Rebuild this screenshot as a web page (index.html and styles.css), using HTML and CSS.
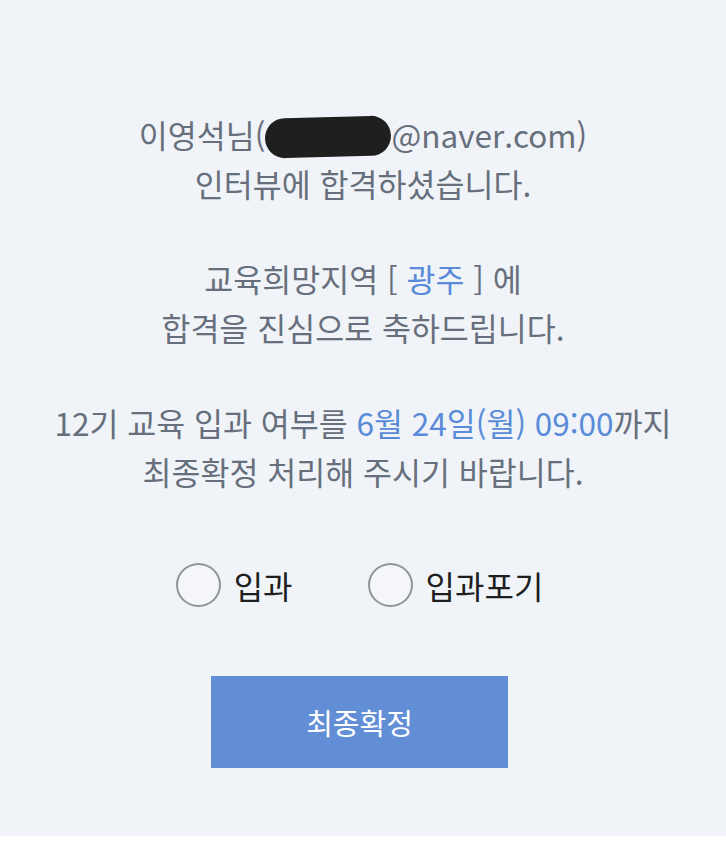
FILE: index.html
```html
<!DOCTYPE html>
<html lang="ko">
<head>
    <meta charset="UTF-8">
    <meta name="viewport" content="width=device-width, initial-scale=1.0">
    <title>면접 결과 안내</title>
    <link rel="stylesheet" href="styles.css">
</head>
<body>
    <div class="result">
        <p class="msg">이영석님(<span class="masked"></span>@naver.com)<br>인터뷰에 합격하셨습니다.</p>
        <p class="msg">교육희망지역 [ <span class="point">광주</span> ] 에<br>합격을 진심으로 축하드립니다.</p>
        <p class="msg">12기 교육 입과 여부를 <span class="point">6월 24일(월) 09:00</span>까지<br>최종확정 처리해 주시기 바랍니다.</p>

        <div class="choice">
            <label class="radio"><input type="radio" name="join" value="Y"><span class="mark"></span>입과</label>
            <label class="radio"><input type="radio" name="join" value="N"><span class="mark"></span>입과포기</label>
        </div>

        <button class="confirm-btn" type="button">최종확정</button>
    </div>
</body>
</html>
```

FILE: styles.css
```css
* {
    box-sizing: border-box;
    margin: 0;
    padding: 0;
    font-family: "Noto Sans CJK KR", "Noto Sans", sans-serif;
}

body {
    background: #fff;
}

.result {
    height: 836px;
    background-color: #f0f4f8;
    padding-top: 110px;
    display: flex;
    flex-direction: column;
    align-items: center;
}

.msg {
    text-align: center;
    font-size: 31.5px;
    line-height: 49px;
    color: #676f7c;
    margin-bottom: 46px;
}

.msg:last-of-type {
    margin-bottom: 0;
}

.point {
    color: #5a8bd8;
}

.masked {
    display: inline-block;
    width: 126px;
    height: 40px;
    background: #1f1f1f;
    border-radius: 20px;
    vertical-align: -9px;
    transform: rotate(-1.5deg);
}

.choice {
    display: flex;
    gap: 75px;
    margin-top: 66px;
    margin-left: -7px;
}

.radio {
    display: flex;
    align-items: center;
    gap: 13px;
    font-size: 32px;
    color: #1e1e1e;
    cursor: pointer;
}

.radio input {
    display: none;
}

.radio .mark {
    width: 45px;
    height: 44px;
    border: 2px solid #8e949c;
    border-radius: 50%;
    background: #f4f6f9;
}

.radio input:checked + .mark {
    border-color: #628ed6;
    box-shadow: inset 0 0 0 9px #f4f6f9, inset 0 0 0 20px #628ed6;
}

.confirm-btn {
    margin-top: 68px;
    margin-left: -7px;
    width: 297px;
    height: 92px;
    border: none;
    background-color: #628ed6;
    color: #fff;
    font-size: 29px;
    cursor: pointer;
}
```
